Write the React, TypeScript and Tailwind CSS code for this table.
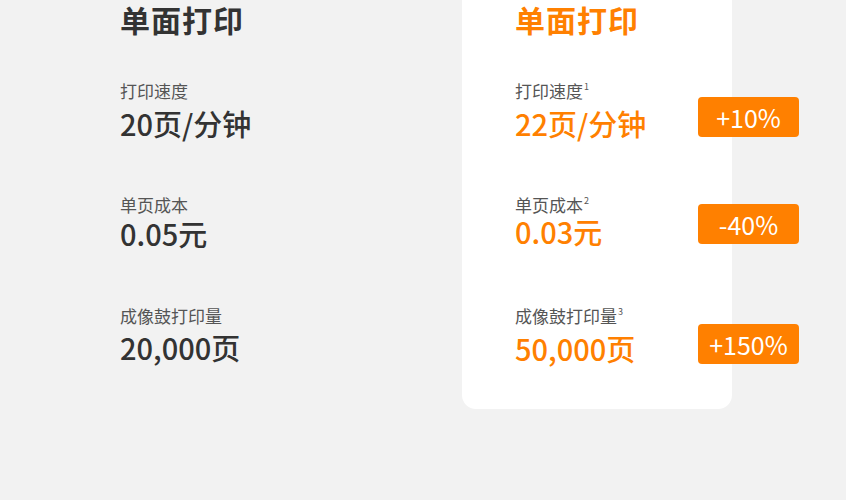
import React from "react";

const font = { fontFamily: '"Noto Sans CJK SC", "Noto Sans", sans-serif' };

type Row = { label: string; sup?: string; value: string; badge?: string; labelTop: string; valueGap: string; badgeTop?: string };

function Col({ accent, rows }: { accent: boolean; rows: Row[] }) {
  const valColor = accent ? "text-[#ff8000]" : "text-[#333333]";
  return (
    <div className="flex flex-col">
      <div className={`pt-[1px] text-[30px] leading-[36px] font-bold tracking-[1px] ${valColor}`}>单面打印</div>
      {rows.map((r, i) => (
        <div key={i} className={`relative ${r.labelTop}`}>
          <div className="text-[17px] leading-[20px] text-[#555555] whitespace-nowrap">
            {r.label}
            {r.sup && <span className="text-[9px] leading-none ml-[1px] relative top-[-8px]">{r.sup}</span>}
          </div>
          <div className={`${r.valueGap} text-[29px] leading-[32px] font-medium whitespace-nowrap ${valColor}`}>{r.value}</div>
          {r.badge && (
            <div className={`absolute left-[183px] ${r.badgeTop} w-[101px] h-[40px] rounded-[4px] bg-[#ff8000] text-white text-[25px] leading-none flex items-center justify-center`}>
              {r.badge}
            </div>
          )}
        </div>
      ))}
    </div>
  );
}

export default function App() {
  return (
    <div style={font} className="w-[846px] h-[500px] bg-[#f2f2f2] flex overflow-hidden">
      <div className="w-[462px] pl-[120px]">
        <Col
          accent={false}
          rows={[
            { label: "打印速度", value: "20页/分钟", labelTop: "mt-[44px]", valueGap: "mt-[6px]" },
            { label: "单页成本", value: "0.05元", labelTop: "mt-[56px]", valueGap: "mt-[2px]" },
            { label: "成像鼓打印量", value: "20,000页", labelTop: "mt-[57px]", valueGap: "mt-[5px]" },
          ]}
        />
      </div>
      <div className="w-[270px] h-[409px] bg-white rounded-b-[14px] pl-[53px]">
        <Col
          accent
          rows={[
            { label: "打印速度", sup: "1", value: "22页/分钟", badge: "+10%", labelTop: "mt-[44px]", valueGap: "mt-[6px]", badgeTop: "top-[16px]" },
            { label: "单页成本", sup: "2", value: "0.03元", badge: "-40%", labelTop: "mt-[56px]", valueGap: "mt-[0px]", badgeTop: "top-[9px]" },
            { label: "成像鼓打印量", sup: "3", value: "50,000页", badge: "+150%", labelTop: "mt-[59px]", valueGap: "mt-[6px]", badgeTop: "top-[18px]" },
          ]}
        />
      </div>
    </div>
  );
}
